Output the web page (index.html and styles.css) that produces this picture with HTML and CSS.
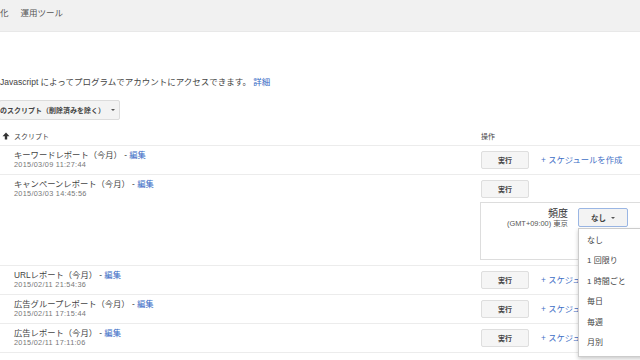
FILE: index.html
```html
<!DOCTYPE html>
<html lang="ja">
<head>
  <meta charset="UTF-8">
  <meta name="viewport" content="width=device-width, initial-scale=1.0">
  <title>スクリプト</title>
  <link rel="stylesheet" href="styles.css">
</head>
<body>
  <!-- top navigation -->
  <div class="topbar">
    <span class="tab">化</span>
    <span class="tab">運用ツール</span>
  </div>

  <p class="intro">Javascript によってプログラムでアカウントにアクセスできます。 <a href="#">詳細</a></p>

  <div class="filter">
    <button class="filter-btn">のスクリプト（削除済みを除く）<span class="caret"></span></button>
  </div>

  <!-- scripts table -->
  <div class="table">
    <div class="row head">
      <div class="name">
        <svg class="sort" width="8" height="8" viewBox="0 0 8 8"><path d="M4 0.5 L7.5 4.2 H5.2 V7.5 H2.8 V4.2 H0.5 Z" fill="#333"/></svg>
        スクリプト
      </div>
      <div class="actions">操作</div>
    </div>

    <div class="row">
      <div class="name">
        <div class="title">キーワードレポート（今月） - <a href="#">編集</a></div>
        <div class="date">2015/03/09 11:27:44</div>
      </div>
      <div class="actions">
        <button class="run">実行</button>
        <a class="schedule" href="#">+ スケジュールを作成</a>
      </div>
    </div>

    <div class="row open">
      <div class="name">
        <div class="title">キャンペーンレポート（今月） - <a href="#">編集</a></div>
        <div class="date">2015/03/03 14:45:56</div>
      </div>
      <div class="actions">
        <button class="run">実行</button>
        <div class="panel">
          <div class="freq">
            <div class="freq-label">頻度</div>
            <div class="tz">(GMT+09:00) 東京</div>
          </div>
          <div class="select">
            <button class="select-btn">なし<span class="caret"></span></button>
            <ul class="menu">
              <li>なし</li>
              <li>1 回限り</li>
              <li>1 時間ごと</li>
              <li>毎日</li>
              <li>毎週</li>
              <li>月別</li>
            </ul>
          </div>
        </div>
      </div>
    </div>

    <div class="row">
      <div class="name">
        <div class="title">URLレポート（今月） - <a href="#">編集</a></div>
        <div class="date">2015/02/11 21:54:36</div>
      </div>
      <div class="actions">
        <button class="run">実行</button>
        <a class="schedule" href="#">+ スケジュールを作成</a>
      </div>
    </div>

    <div class="row">
      <div class="name">
        <div class="title">広告グループレポート（今月） - <a href="#">編集</a></div>
        <div class="date">2015/02/11 17:15:44</div>
      </div>
      <div class="actions">
        <button class="run">実行</button>
        <a class="schedule" href="#">+ スケジュールを作成</a>
      </div>
    </div>

    <div class="row">
      <div class="name">
        <div class="title">広告レポート（今月） - <a href="#">編集</a></div>
        <div class="date">2015/02/11 17:11:06</div>
      </div>
      <div class="actions">
        <button class="run">実行</button>
        <a class="schedule" href="#">+ スケジュールを作成</a>
      </div>
    </div>
  </div>
</body>
</html>
```

FILE: styles.css
```css
html, body {
  overflow: hidden;
}
body {
  margin: 0;
  width: 640px;
  height: 360px;
  background: #fff;
  color: #444;
  font-family: "Liberation Sans", "Noto Sans CJK JP", sans-serif;
  font-size: 8px;
}
a {
  color: #3367c4;
  text-decoration: none;
}
button {
  font-family: inherit;
  color: #444;
  cursor: pointer;
}
.topbar {
  height: 32px;
  background: #f1f1f1;
  border-bottom: 1px solid #e8e8e8;
  box-sizing: border-box;
  display: flex;
  align-items: flex-start;
  padding-top: 8px;
  gap: 12px;
  line-height: 10px;
  font-size: 8.5px;
  color: #555;
}
.intro {
  margin: 44px 0 0;
  line-height: 12px;
  font-size: 8.5px;
  color: #444;
}
.filter {
  margin-top: 12px;
}
.filter-btn {
  height: 20px;
  width: 121px;
  padding: 0;
  margin-left: -1px;
  border: 1px solid #dcdcdc;
  border-radius: 2px;
  background: #f3f3f3;
  font-size: 7px;
  font-weight: bold;
  text-align: left;
  display: flex;
  align-items: center;
  gap: 6px;
}
.caret {
  display: inline-block;
  border-left: 2px solid transparent;
  border-right: 2px solid transparent;
  border-top: 2.5px solid #555;
}
.table {
  margin-top: 6px;
}
.row {
  display: flex;
  border-bottom: 1px solid #ececec;
}
.row.head {
  height: 19px;
  align-items: center;
  font-size: 7px;
  color: #444;
}
.name {
  flex: 0 0 480px;
  box-sizing: border-box;
  padding: 5px 0 5px 14px;
}
.head .name {
  padding: 0 0 0 2px;
  display: flex;
  align-items: center;
}
.sort {
  margin-right: 4px;
}
.head .actions {
  padding: 0 0 0 1px;
}
.title {
  line-height: 9px;
  font-size: 8.3px;
  color: #444;
}
.date {
  line-height: 9px;
  font-size: 7.3px;
  letter-spacing: 0.3px;
  color: #777;
}
.actions {
  flex: 1;
  padding-top: 5px;
  display: flex;
  align-items: flex-start;
  flex-wrap: wrap;
}
.run {
  height: 18px;
  width: 48px;
  padding: 0;
  margin-left: 1px;
  border: 1px solid #dedede;
  border-radius: 2px;
  background: #f5f5f5;
  font-size: 7px;
  font-weight: bold;
}
.schedule {
  margin-left: 12px;
  line-height: 18px;
  font-size: 8.3px;
  color: #3f6fc6;
  white-space: nowrap;
}
.open .actions {
  padding-bottom: 5px;
}
.panel {
  flex: 0 0 180px;
  height: 58px;
  margin-top: 4px;
  border: 1px solid #ddd;
  box-sizing: border-box;
  display: flex;
  padding-top: 5px;
}
.freq {
  width: 87px;
  text-align: right;
  margin-right: 10px;
}
.freq-label {
  font-size: 10px;
  line-height: 12px;
  color: #333;
}
.tz {
  font-size: 7.4px;
  line-height: 8px;
  color: #555;
}
.select {
  position: relative;
}
.select-btn {
  height: 19px;
  width: 50px;
  padding: 0;
  border: 1px solid #9ab6e4;
  border-radius: 2px;
  background: #f3f3f3;
  font-size: 7.5px;
  font-weight: bold;
  display: flex;
  align-items: center;
  justify-content: center;
  gap: 5px;
}
.menu {
  position: absolute;
  top: 20px;
  left: 0;
  width: 80px;
  margin: 0;
  padding: 2px 0 3px;
  list-style: none;
  background: #fff;
  border: 1px solid #ccc;
  box-shadow: 0 2px 4px rgba(0, 0, 0, 0.2);
  z-index: 2;
}
.menu li {
  height: 20.4px;
  line-height: 20.4px;
  padding-left: 8px;
  font-size: 8px;
  color: #444;
}
```
